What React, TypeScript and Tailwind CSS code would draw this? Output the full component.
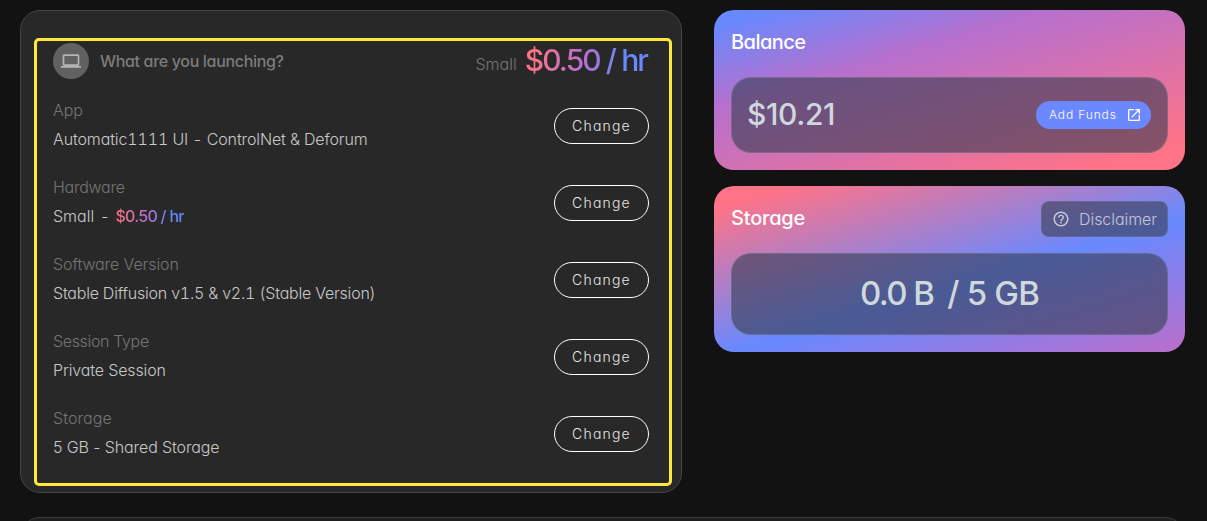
import React from "react";
import { MdLaptop, MdOpenInNew, MdHelpOutline } from "react-icons/md";

const rows: { label: string; value: React.ReactNode; labelClass: string; valueClass: string }[] = [
  {
    label: "App",
    value: "Automatic1111 UI - ControlNet & Deforum",
    labelClass: "tracking-[-0.1px]",
    valueClass: "tabular-nums tracking-[-0.12px]",
  },
  {
    label: "Hardware",
    value: (
      <>
        <span>Small</span>
        <span className="ml-[7px]">-</span>
        <Price className="ml-[7px] text-base tracking-[-0.7px]" />
      </>
    ),
    labelClass: "tracking-[-0.25px]",
    valueClass: "",
  },
  {
    label: "Software Version",
    value: "Stable Diffusion v1.5 & v2.1 (Stable Version)",
    labelClass: "tracking-[-0.1px]",
    valueClass: "tabular-nums tracking-[-0.21px]",
  },
  {
    label: "Session Type",
    value: "Private Session",
    labelClass: "tracking-[-0.35px]",
    valueClass: "tracking-[-0.14px]",
  },
  {
    label: "Storage",
    value: "5 GB - Shared Storage",
    labelClass: "tracking-[0.08px]",
    valueClass: "tracking-[-0.11px]",
  },
];

function Price({ className }: { className: string }) {
  return (
    <span
      className={`bg-[linear-gradient(100deg,#ff7387_8%,#b370cf_48%,#6889ff_78%)] bg-clip-text font-medium text-transparent ${className}`}
    >
      $0.50 / hr
    </span>
  );
}

function LaunchCard() {
  return (
    <section className="relative h-[483px] w-[662px] rounded-[20px] border border-[#444] bg-[#282828] pt-8 pr-8 pl-8">
      <div className="pointer-events-none absolute top-[27px] left-[13px] h-[448px] w-[638px] rounded-[5px] border-3 border-[#ffe83b]" />
      <header className="flex h-9 items-center">
        <span className="flex size-9 items-center justify-center rounded-full bg-[#616161] pr-px pb-px text-[#b5b5b5]">
          <MdLaptop size={20} />
        </span>
        <h2 className="ml-[11px] pb-px text-base font-medium tracking-[-0.33px] text-[#7c7c7c]">
          What are you launching?
        </h2>
        <span className="mt-[6px] ml-auto text-base font-light text-[#757575]">Small</span>
        <Price className="ml-2 pr-[2px] pb-[2px] text-[30px] leading-9 tracking-[-1.9px]" />
      </header>
      <div className="mt-5 flex flex-col gap-6">
        {rows.map((row) => (
          <div key={row.label} className="flex h-[53px] items-center justify-between">
            <div className="flex flex-col gap-[5px] pb-[2px] text-base leading-6 whitespace-nowrap">
              <span className={`font-light text-[#757575] ${row.labelClass}`}>{row.label}</span>
              <span className={`font-light text-[#c8c8c8] ${row.valueClass}`}>{row.value}</span>
            </div>
            <button className="h-9 w-[95px] rounded-full border border-white text-sm font-light tracking-[1.2px] text-[#e6e6e6]">
              Change
            </button>
          </div>
        ))}
      </div>
    </section>
  );
}

function BalanceCard() {
  return (
    <section className="h-40 rounded-[20px] bg-[linear-gradient(163.5deg,#6889ff_5%,#b670cd_33%,#ff7387_91%)] px-[17px] pt-[17px]">
      <h2 className="h-[50px] text-xl leading-[30px] font-medium tracking-[-0.55px] text-white">Balance</h2>
      <div className="flex h-19 items-center justify-between rounded-[20px] border border-[#8a7a95]/60 bg-[#353c50]/60 px-[15px]">
        <span className="pb-[2px] text-[30px] font-medium tracking-[-0.4px] text-[#cfd8dc]">$10.21</span>
        <button className="mr-px flex h-7 w-[115px] items-center justify-between rounded-full bg-[#6b88ff] pr-[9px] pl-[13px] text-xs font-light tracking-[0.85px] text-white">
          Add Funds
          <MdOpenInNew size={16} />
        </button>
      </div>
    </section>
  );
}

function StorageCard() {
  return (
    <section className="h-[166px] rounded-[20px] bg-[linear-gradient(163.5deg,#ff7387_7%,#6889ff_56%,#b670cd_97%)] px-[17px] pt-[15px]">
      <div className="flex h-[52px] items-start justify-between">
        <h2 className="pt-[2px] text-xl leading-[30px] font-medium tracking-[-0.2px] text-white">Storage</h2>
        <button className="flex h-9 w-[127px] items-center rounded-lg border border-[#6c6d9b]/70 bg-[#353c50]/60 pl-[10px] text-[#c5c6d8]">
          <MdHelpOutline size={18} />
          <span className="ml-[9px] pb-px text-base font-light tracking-[-0.05px]">Disclaimer</span>
        </button>
      </div>
      <div className="flex h-[82px] items-center justify-center rounded-[20px] border border-[#77789b]/60 bg-[#353c50]/60 text-[33px] font-medium tracking-[-1.35px] text-[#cfd8dc]">
        <span className="tracking-[-1.6px]">0.0 B</span>
        <span className="ml-[14px] tracking-[-0.8px]">/ 5 GB</span>
      </div>
    </section>
  );
}

export default function App() {
  return (
    <main className="h-[521px] w-[1207px] overflow-hidden bg-[#121212] pt-[10px] pl-5 font-['Inter','Liberation_Sans',sans-serif] [font-feature-settings:'cv11']">
      <div className="flex gap-8">
        <LaunchCard />
        <div className="flex w-[471px] flex-col gap-4">
          <BalanceCard />
          <StorageCard />
        </div>
      </div>
      <section className="mt-6 h-20 w-[1165px] rounded-[20px] border border-[#3c3c3c] bg-[#1e1e1e]" />
    </main>
  );
}
